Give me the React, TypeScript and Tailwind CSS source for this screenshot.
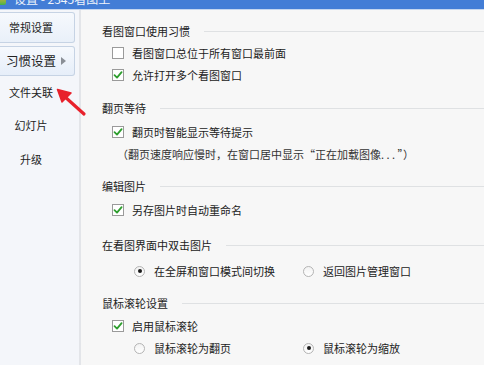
import React from "react";

const font = { fontFamily: '"Noto Sans CJK SC", "Noto Sans", sans-serif' };

function Check({ checked }: { checked?: boolean }) {
  return (
    <div className="w-[12px] h-[12px] border border-[#9a9a9a] bg-white flex items-center justify-center shrink-0">
      {checked && (
        <svg width="10" height="10" viewBox="0 0 10 10">
          <path d="M1.5 5.2 L4 7.6 L8.6 2.2" fill="none" stroke="#2e9e2e" strokeWidth="1.8" strokeLinecap="round" strokeLinejoin="round" />
        </svg>
      )}
    </div>
  );
}

function Radio({ on }: { on?: boolean }) {
  return (
    <div className="w-[11px] h-[11px] rounded-full border border-[#b4b4b4] bg-gradient-to-b from-[#f2f2f2] to-white flex items-center justify-center shrink-0">
      {on && <div className="w-[4px] h-[4px] rounded-full bg-[#1a1a1a]" />}
    </div>
  );
}

function Heading({ text, mt }: { text: string; mt: string }) {
  return (
    <div className={`flex items-center h-[16px] pl-[21px] ${mt}`}>
      <span className="text-[11px] leading-none text-[#222] whitespace-nowrap">{text}</span>
      <div className="flex-1 h-px bg-[#dfe1e3] ml-[14px]" />
    </div>
  );
}

function CheckRow({ text, checked, mt = "" }: { text: string; checked?: boolean; mt?: string }) {
  return (
    <div className={`flex items-center h-[22px] pl-[31px] gap-[8px] ${mt}`}>
      <Check checked={checked} />
      <span className="text-[11px] leading-none text-[#222] whitespace-nowrap">{text}</span>
    </div>
  );
}

function RadioRow({ a, b, sel, mt }: { a: string; b: string; sel: 0 | 1; mt: string }) {
  return (
    <div className={`flex items-center h-[22px] ${mt}`}>
      <div className="flex items-center gap-[9px] w-[188px] pl-[53px]">
        <Radio on={sel === 0} />
        <span className="text-[11px] leading-none text-[#222] whitespace-nowrap">{a}</span>
      </div>
      <div className="flex items-center gap-[9px] pl-[34px]">
        <Radio on={sel === 1} />
        <span className="text-[11px] leading-none text-[#222] whitespace-nowrap">{b}</span>
      </div>
    </div>
  );
}

export default function App() {
  return (
    <div className="relative w-[484px] h-[365px] overflow-hidden bg-[#f7f7f7] flex flex-col" style={font}>
      {/* title bar */}
      <div className="h-[9px] bg-[#437dd6] overflow-hidden flex items-start shrink-0">
        <div className="flex items-center mt-[-9px] h-[15px]">
          <div className="w-[6px] h-[12px] bg-gradient-to-b from-[#f5a623] to-[#3cb34a] rounded-r-[2px]" />
          <span className="ml-[8px] text-[12px] text-[#eef3fb] leading-none whitespace-nowrap">设置 - 2345看图王</span>
        </div>
      </div>
      <div className="h-px bg-[#c5d6ef] shrink-0" />

      <div className="flex flex-1 min-h-0">
        {/* sidebar */}
        <div className="w-[81px] shrink-0 bg-[#f4f6fa] border-r-2 border-[#e3e5e9] flex flex-col">
          <div className="mt-[2px] h-[31px] w-[75px] border border-l-0 border-[#c6d3e4] rounded-r-[3px] bg-gradient-to-b from-[#f6f9fd] to-[#e9f0f9] flex items-center">
            <span className="w-[62px] text-center text-[11px] text-[#222] leading-none">常规设置</span>
          </div>
          <div className="mt-[3px] h-[30px] w-[75px] border border-l-0 border-[#c6d3e4] rounded-r-[3px] bg-gradient-to-b from-[#f6f9fd] to-[#e6eef9] flex items-center">
            <span className="w-[62px] text-center text-[12.5px] text-[#222] leading-none">习惯设置</span>
            <svg width="5" height="8" viewBox="0 0 5 8" className="ml-[-1px]">
              <path d="M0 0 L5 4 L0 8 Z" fill="#8a8f96" />
            </svg>
          </div>
          <div className="h-[32px] w-[62px] flex items-center justify-center text-[11px] text-[#222]">文件关联</div>
          <div className="h-[34px] w-[62px] flex items-center justify-center text-[11px] text-[#222]">幻灯片</div>
          <div className="h-[34px] w-[62px] flex items-center justify-center text-[11px] text-[#222]">升级</div>
        </div>

        {/* content */}
        <div className="flex-1 flex flex-col">
          <Heading text="看图窗口使用习惯" mt="mt-[13px]" />
          <CheckRow text="看图窗口总位于所有窗口最前面" mt="mt-[3px]" />
          <CheckRow text="允许打开多个看图窗口" checked />
          <Heading text="翻页等待" mt="mt-[14px]" />
          <CheckRow text="翻页时智能显示等待提示" checked mt="mt-[5px]" />
          <div className="h-[22px] pl-[36px] flex items-center">
            <span className="text-[11px] leading-none text-[#333] whitespace-nowrap">（翻页速度响应慢时，在窗口居中显示“正在加载图像. . . ”）</span>
          </div>
          <Heading text="编辑图片" mt="mt-[13px]" />
          <CheckRow text="另存图片时自动重命名" checked mt="mt-[5px]" />
          <Heading text="在看图界面中双击图片" mt="mt-[16px]" />
          <RadioRow a="在全屏和窗口模式间切换" b="返回图片管理窗口" sel={0} mt="mt-[7px]" />
          <Heading text="鼠标滚轮设置" mt="mt-[13px]" />
          <CheckRow text="启用鼠标滚轮" checked mt="mt-[4px]" />
          <RadioRow a="鼠标滚轮为翻页" b="鼠标滚轮为缩放" sel={1} mt="" />
        </div>
      </div>

      {/* red arrow annotation */}
      <svg className="absolute left-0 top-0 pointer-events-none" width="484" height="365">
        <line x1="84" y1="114" x2="64" y2="96" stroke="#e8212b" strokeWidth="3.2" strokeLinecap="round" />
        <path d="M57.5 89.5 L71 93 L62 102 Z" fill="#e8212b" stroke="#e8212b" strokeWidth="1.5" strokeLinejoin="round" />
      </svg>
    </div>
  );
}
